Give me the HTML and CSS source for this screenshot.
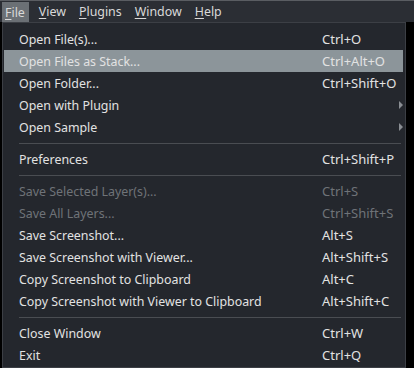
FILE: index.html
```html
<!DOCTYPE html>
<html>
<head>
  <title>File menu</title>
  <link rel="stylesheet" href="styles.css">
</head>
<body>
  <div class="menubar">
    <span class="bar-item active"><u>F</u>ile</span>
    <span class="bar-item"><u>V</u>iew</span>
    <span class="bar-item"><u>P</u>lugins</span>
    <span class="bar-item"><u>W</u>indow</span>
    <span class="bar-item"><u>H</u>elp</span>
  </div>

  <div class="popup">
    <div class="menu-item"><span>Open File(s)...</span><span class="shortcut">Ctrl+O</span></div>
    <div class="menu-item hover"><span>Open Files as Stack...</span><span class="shortcut">Ctrl+Alt+O</span></div>
    <div class="menu-item"><span>Open Folder...</span><span class="shortcut">Ctrl+Shift+O</span></div>
    <div class="menu-item"><span>Open with Plugin</span><span class="arrow"></span></div>
    <div class="menu-item"><span>Open Sample</span><span class="arrow"></span></div>
    <div class="separator"></div>
    <div class="menu-item"><span>Preferences</span><span class="shortcut">Ctrl+Shift+P</span></div>
    <div class="separator"></div>
    <div class="menu-item disabled"><span>Save Selected Layer(s)...</span><span class="shortcut">Ctrl+S</span></div>
    <div class="menu-item disabled"><span>Save All Layers...</span><span class="shortcut">Ctrl+Shift+S</span></div>
    <div class="menu-item"><span>Save Screenshot...</span><span class="shortcut">Alt+S</span></div>
    <div class="menu-item"><span>Save Screenshot with Viewer...</span><span class="shortcut">Alt+Shift+S</span></div>
    <div class="menu-item"><span>Copy Screenshot to Clipboard</span><span class="shortcut">Alt+C</span></div>
    <div class="menu-item"><span>Copy Screenshot with Viewer to Clipboard</span><span class="shortcut">Alt+Shift+C</span></div>
    <div class="separator"></div>
    <div class="menu-item"><span>Close Window</span><span class="shortcut">Ctrl+W</span></div>
    <div class="menu-item"><span>Exit</span><span class="shortcut">Ctrl+Q</span></div>
  </div>
</body>
</html>
```

FILE: styles.css
```css
body {
  margin: 0;
  background: #000;
  font-family: "Noto Sans", sans-serif;
  font-size: 12.4px;
  color: #e2e2e2;
  width: 414px;
  height: 368px;
  overflow: hidden;
}
.menubar {
  background: #2b2e34;
  border-top: 1px solid #5a5d62;
  display: flex;
  align-items: stretch;
  padding-left: 2px;
  box-sizing: border-box;
  height: 22px;
}
.bar-item {
  display: flex;
  align-items: center;
  padding: 0 3px;
  margin-right: 7px;
  color: #d9d9d9;
}
.bar-item u {
  text-decoration-thickness: 1px;
  text-underline-offset: 2px;
}
.bar-item.active {
  background: #6b7075;
  margin-top: 1px;
  padding-right: 4px;
}
.popup {
  width: 404px;
  margin-left: 2px;
  height: 346px;
  box-sizing: border-box;
  background: #24272d;
  border: 1px solid #3c3f45;
  padding: 5px 2px 0 1px;
}
.menu-item {
  height: 22px;
  display: flex;
  align-items: center;
  padding-left: 15px;
  position: relative;
}
.menu-item.hover {
  background: #8c959a;
}
.menu-item.disabled {
  color: #6f7378;
}
.shortcut {
  position: absolute;
  left: 318px;
  font-size: 13px;
}
.arrow {
  position: absolute;
  left: 395px;
  top: 7px;
  width: 0;
  height: 0;
  border-left: 4px solid #8a8e93;
  border-top: 4px solid transparent;
  border-bottom: 4px solid transparent;
}
.separator {
  height: 10px;
  display: flex;
  align-items: center;
  padding: 0 2px 0 15px;
}
.separator::after {
  content: "";
  flex: 1;
  height: 1px;
  background: #4a4d52;
}
```
